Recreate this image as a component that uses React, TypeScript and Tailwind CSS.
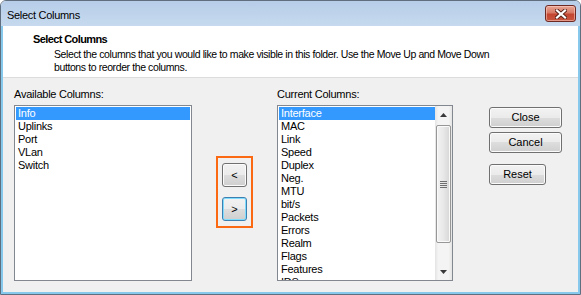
import React from "react";

const AVAILABLE = ["Info", "Uplinks", "Port", "VLan", "Switch"];
const CURRENT = [
  "Interface",
  "MAC",
  "Link",
  "Speed",
  "Duplex",
  "Neg.",
  "MTU",
  "bit/s",
  "Packets",
  "Errors",
  "Realm",
  "Flags",
  "Features",
  "IDS",
];

function Row({ label, selected }: { label: string; selected?: boolean }) {
  return (
    <div
      className={
        selected
          ? "h-[13px] bg-[#3399ff] pl-[2px] leading-[13px] text-white whitespace-nowrap"
          : "h-[13px] pl-[2px] leading-[13px] text-black whitespace-nowrap"
      }
    >
      {label}
    </div>
  );
}

function WinButton({
  children,
  focused,
  className,
}: {
  children: React.ReactNode;
  focused?: boolean;
  className?: string;
}) {
  return (
    <button
      type="button"
      className={
        "flex items-center justify-center rounded-[3px] border bg-[linear-gradient(to_bottom,#f2f2f2_0%,#ebebeb_50%,#dddddd_50%,#cfcfcf_100%)] text-[11px] leading-[13px] text-black " +
        (focused
          ? "border-[#3c7fb1] shadow-[inset_0_0_0_1px_#7fdcfd] "
          : "border-[#707070] shadow-[inset_0_0_0_1px_#fbfbfb] ") +
        (className ?? "")
      }
    >
      {children}
    </button>
  );
}

function ScrollBar() {
  return (
    <div className="flex w-[17px] shrink-0 flex-col bg-[linear-gradient(to_right,#e4e4e4,#f4f4f4_20%,#f4f4f4_80%,#e4e4e4)]">
      <div className="flex h-[17px] items-center justify-center">
        <svg width="7" height="4" viewBox="0 0 7 4">
          <path d="M3.5 0 L7 4 L0 4 Z" fill="#3a3a3a" />
        </svg>
      </div>
      <div className="mt-[2px] flex h-[118px] items-center justify-center rounded-[2px] border border-[#979797] bg-[linear-gradient(to_right,#f3f3f3,#e8e8e8_50%,#d6d6d6)] mx-[1px] shadow-[inset_0_0_0_1px_#fafafa]">
        <div className="flex flex-col gap-[1px]">
          <div className="h-[1px] w-[7px] bg-[#6f6f6f]" />
          <div className="h-[1px] w-[7px] bg-[#6f6f6f]" />
          <div className="h-[1px] w-[7px] bg-[#6f6f6f]" />
          <div className="h-[1px] w-[7px] bg-[#6f6f6f]" />
        </div>
      </div>
      <div className="flex-1" />
      <div className="flex h-[17px] items-center justify-center">
        <svg width="7" height="4" viewBox="0 0 7 4">
          <path d="M0 0 L7 0 L3.5 4 Z" fill="#3a3a3a" />
        </svg>
      </div>
    </div>
  );
}

export default function App() {
  return (
    <div className="h-[295px] w-[581px] bg-white font-['Liberation_Sans',Arial,sans-serif] text-[11px] text-black">
      <div className="flex h-[295px] w-[581px] flex-col overflow-hidden rounded-t-[6px] border border-[#5f6f80]">
        {/* title bar */}
        <div className="flex h-[25px] shrink-0 items-start justify-between bg-[linear-gradient(to_bottom,#b7cde8,#c6d9ee)] pl-[6px] pr-[4px]">
          <span className="pt-[8px] leading-[13px] tracking-[-0.3px]">Select Columns</span>
          <div className="mt-[4px] flex h-[17px] w-[31px] items-center justify-center rounded-[3px] border border-[#6e2a22] bg-[linear-gradient(to_bottom,#e9a595_0%,#d77a66_45%,#c4452f_55%,#c8553f_100%)] shadow-[inset_0_0_0_1px_rgba(255,220,210,0.5)]">
            <svg width="12" height="10" viewBox="0 0 12 10">
              <path d="M2 1.5 L10 8.5 M10 1.5 L2 8.5" stroke="#5a2018" strokeWidth="4" strokeLinecap="square" />
              <path d="M2 1.5 L10 8.5 M10 1.5 L2 8.5" stroke="#ffffff" strokeWidth="2.2" strokeLinecap="square" />
            </svg>
          </div>
        </div>

        {/* client */}
        <div className="flex flex-1 flex-col border-x-2 border-b-2 border-[#86c9ec]">
          <div className="h-[52px] shrink-0 border-b border-[#dcdcdc] bg-white pl-[30px] pt-[7px]">
            <div className="text-[11px] font-bold leading-[13px] tracking-[-0.6px]">Select Columns</div>
            <div className="mt-[2px] pl-[21px] text-[10.5px] leading-[13px] tracking-[-0.4px] whitespace-nowrap">
              Select the columns that you would like to make visible in this folder. Use the Move Up and Move Down
              <br />
              buttons to reorder the columns.
            </div>
          </div>

          <div className="flex flex-1 items-start bg-[#f0f0f0] pl-[11px] pt-[10px]">
            {/* available */}
            <div className="flex w-[178px] flex-col">
              <div className="mb-[4px] leading-[13px] tracking-[-0.25px]">Available Columns:</div>
              <div className="h-[176px] border border-[#828790] bg-white p-[1px] tracking-[-0.25px]">
                {AVAILABLE.map((c, i) => (
                  <Row key={c} label={c} selected={i === 0} />
                ))}
              </div>
            </div>

            {/* move buttons */}
            <div className="ml-[24px] mt-[68px] flex w-[37px] flex-col gap-[10px] border-2 border-[#fb6a12] px-[4px] py-[5px]">
              <WinButton className="h-[24px] w-[25px]">&lt;</WinButton>
              <WinButton focused className="h-[24px] w-[25px]">&gt;</WinButton>
            </div>

            {/* current */}
            <div className="ml-[24px] flex w-[176px] flex-col">
              <div className="mb-[4px] leading-[13px] tracking-[-0.25px]">Current Columns:</div>
              <div className="flex h-[176px] border border-[#828790] bg-white">
                <div className="flex-1 overflow-hidden pl-[1px] pt-[1px] tracking-[-0.25px]">
                  {CURRENT.map((c, i) => (
                    <Row key={c} label={c} selected={i === 0} />
                  ))}
                </div>
                <ScrollBar />
              </div>
            </div>

            {/* action buttons */}
            <div className="ml-[36px] mt-[19px] flex flex-col items-start">
              <WinButton className="h-[21px] w-[73px]">Close</WinButton>
              <WinButton className="mt-[4px] h-[21px] w-[73px]">Cancel</WinButton>
              <WinButton className="mt-[11px] h-[21px] w-[57px]">Reset</WinButton>
            </div>
          </div>
        </div>
      </div>
    </div>
  );
}
